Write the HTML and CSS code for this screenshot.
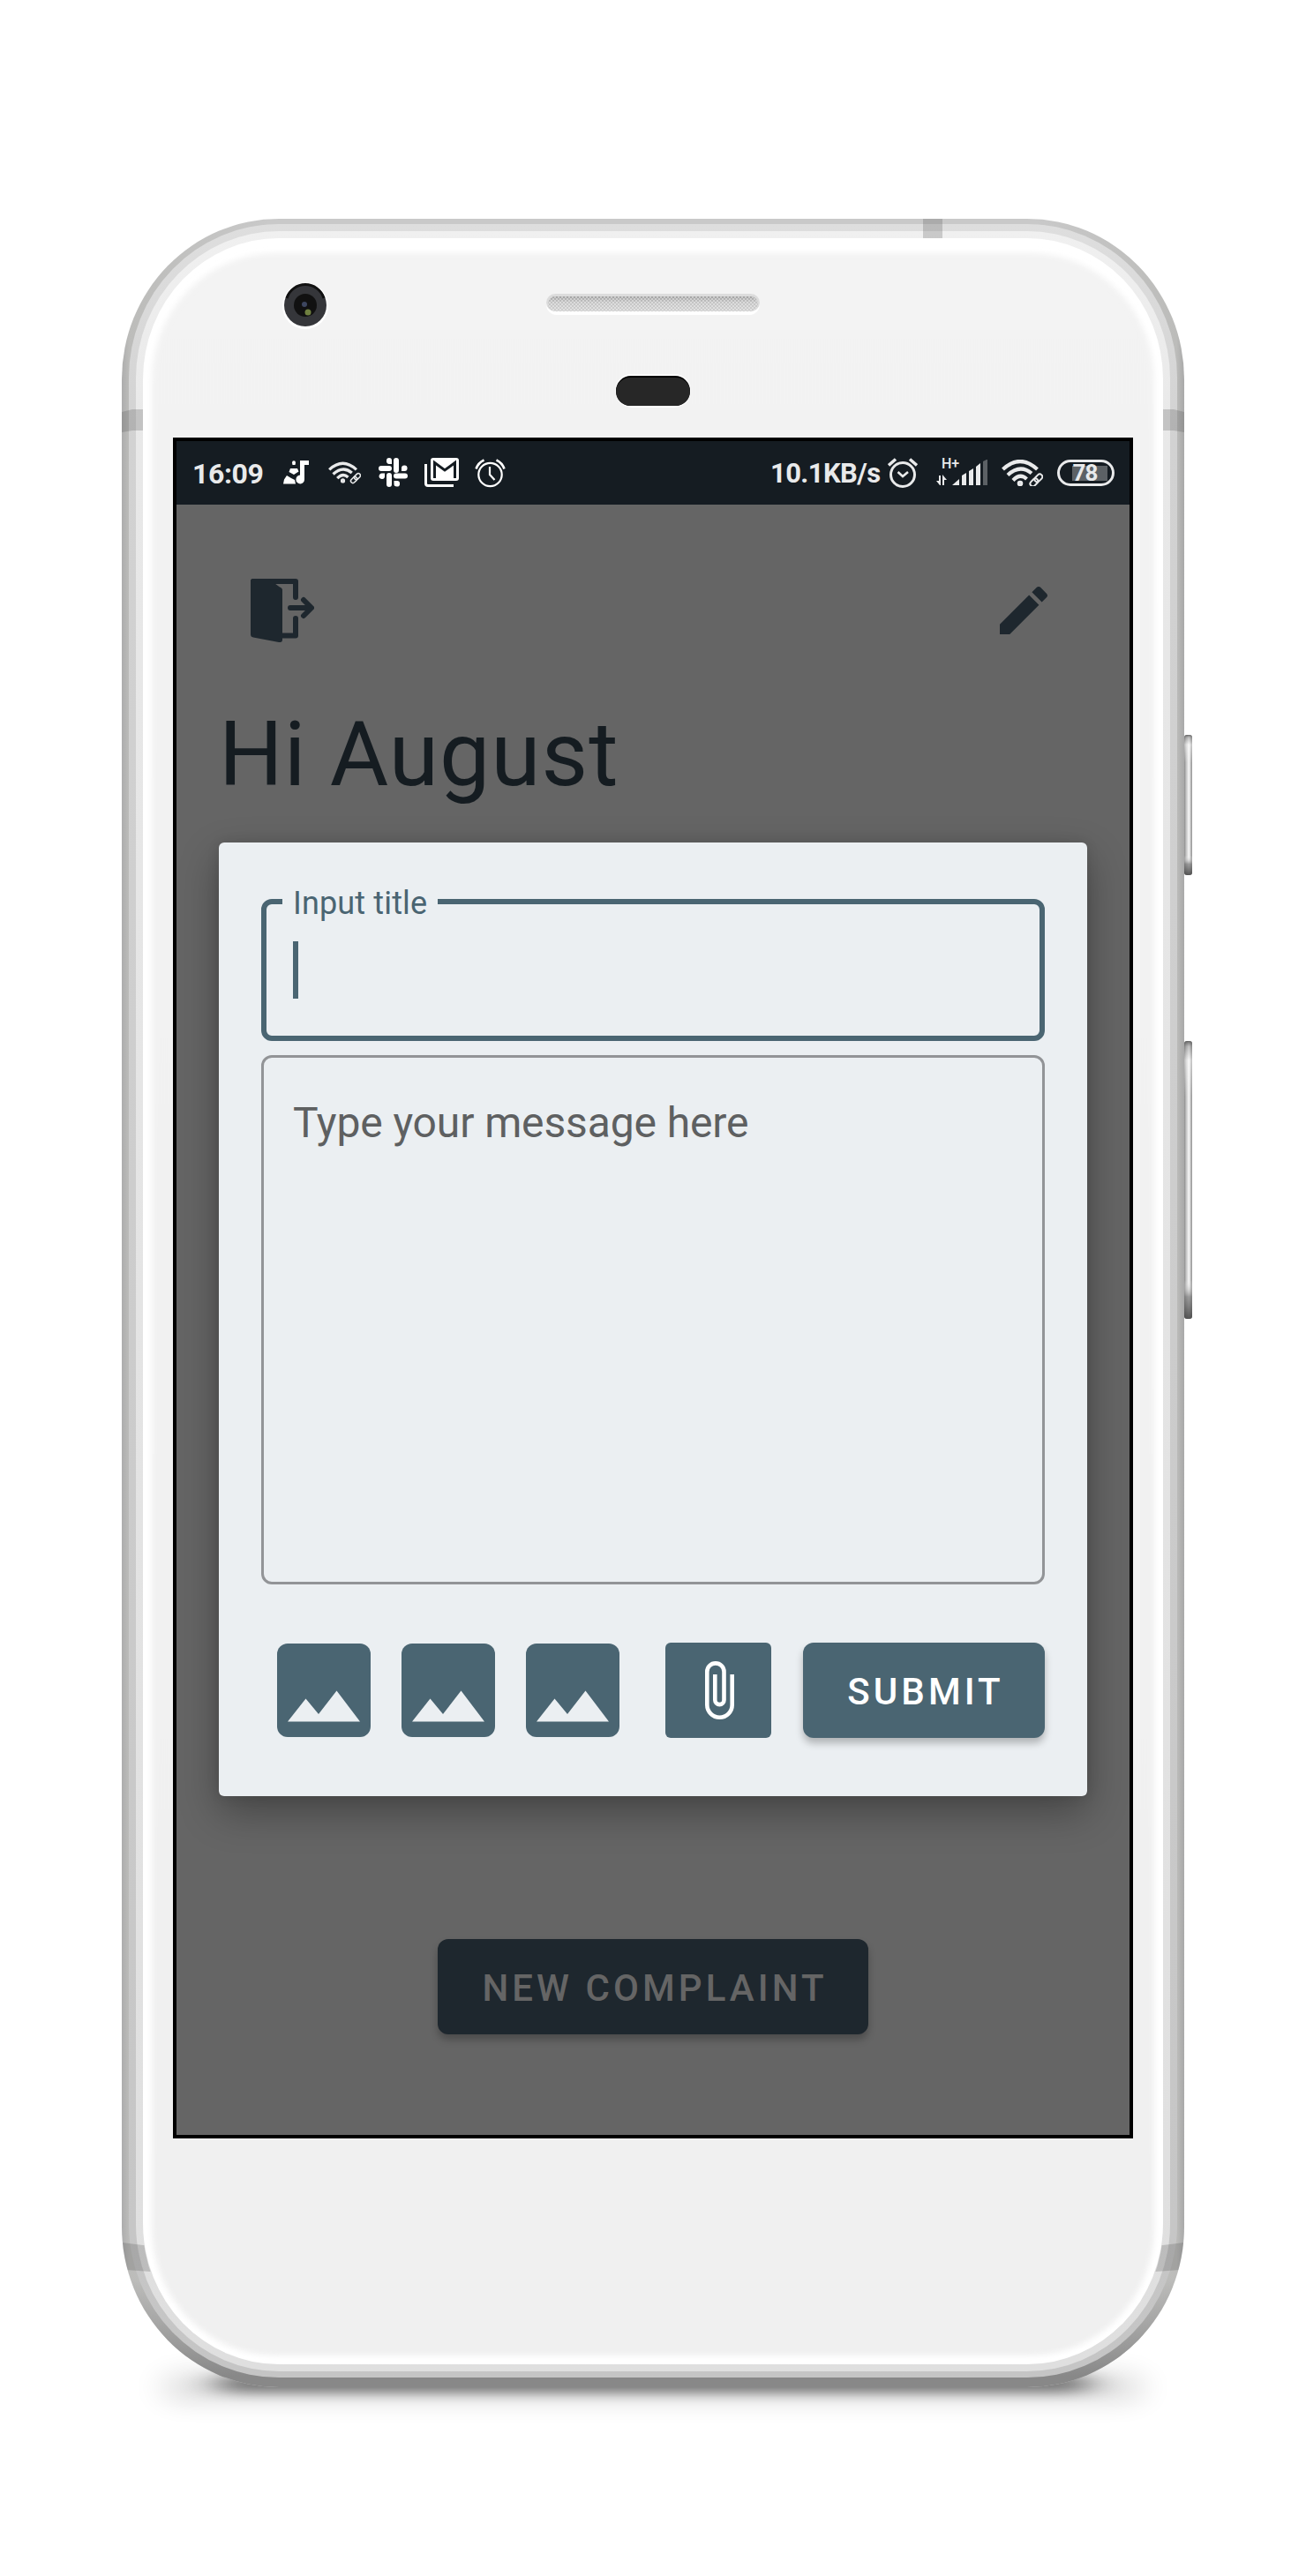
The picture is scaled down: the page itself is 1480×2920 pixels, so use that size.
FILE: index.html
```
<!DOCTYPE html>
<html lang="en">
<head>
<meta charset="utf-8">
<title>New complaint</title>
<link rel="stylesheet" href="styles.css">
</head>
<body>
<div class="stage">
  <svg class="device" viewBox="0 0 1480 2920" aria-hidden="true">
    <defs>
      <linearGradient id="rim" x1="0" y1="0" x2="1" y2="0"><stop offset="0" stop-color="#adadad"/><stop offset=".007" stop-color="#bcbcba"/><stop offset=".14" stop-color="#c9c9c9"/><stop offset=".86" stop-color="#c9c9c9"/><stop offset=".993" stop-color="#bcbcba"/><stop offset="1" stop-color="#a9a9a9"/></linearGradient>
      <linearGradient id="rimBottom" x1="0" y1="0" x2="0" y2="1"><stop offset=".95" stop-color="#888" stop-opacity="0"/><stop offset=".995" stop-color="#888"/></linearGradient>
      <linearGradient id="mid" x1="0" y1="0" x2="0" y2="1"><stop offset="0" stop-color="#dedede"/><stop offset=".1" stop-color="#d2d2d2"/><stop offset="1" stop-color="#c5c5c5"/></linearGradient>
      <linearGradient id="lip" x1="0" y1="0" x2="0" y2="1"><stop offset="0" stop-color="#f0f0f0"/><stop offset=".1" stop-color="#e8e8e8"/><stop offset="1" stop-color="#dfdfdf"/></linearGradient>
      <linearGradient id="face" x1="0" y1="0" x2="0" y2="1"><stop offset="0" stop-color="#f3f3f3"/><stop offset="1" stop-color="#f0f0f0"/></linearGradient>
      <linearGradient id="key" x1="0" y1="0" x2="1" y2="0"><stop offset="0" stop-color="#8b8b8b"/><stop offset=".25" stop-color="#c4c4c4"/><stop offset=".6" stop-color="#f8f8f8"/><stop offset="1" stop-color="#8e8e8e"/></linearGradient>
      <linearGradient id="keyEnds" x1="0" y1="0" x2="0" y2="1"><stop offset="0" stop-color="#444" stop-opacity=".8"/><stop offset=".02" stop-color="#777" stop-opacity=".4"/><stop offset=".07" stop-color="#fff" stop-opacity=".4"/><stop offset=".2" stop-color="#fff" stop-opacity="0"/><stop offset=".86" stop-color="#fff" stop-opacity="0"/><stop offset=".92" stop-color="#777" stop-opacity=".7"/><stop offset="1" stop-color="#444" stop-opacity=".9"/></linearGradient>
      <linearGradient id="slot" x1="0" y1="0" x2="0" y2="1"><stop offset="0" stop-color="#a0a0a0"/><stop offset=".4" stop-color="#c4c4c4"/><stop offset="1" stop-color="#cfcfcf"/></linearGradient>
      <pattern id="mesh" width="4" height="4" patternUnits="userSpaceOnUse"><path d="M0 0h2v2H0zM2 2h2v2H2z" fill="#fff" opacity=".4"/></pattern>
      <filter id="soft" x="-10%" y="-10%" width="120%" height="120%"><feGaussianBlur stdDeviation="3"/></filter>
      <filter id="shade" x="-20%" y="-200%" width="140%" height="500%"><feGaussianBlur stdDeviation="20 7"/></filter>
      <filter id="haze" x="-20%" y="-100%" width="140%" height="300%"><feGaussianBlur stdDeviation="18 14"/></filter>
      <clipPath id="shell"><path clip-rule="evenodd" d="M316 248H1164A178 182 0 0 1 1342 430V2524A178 182 0 0 1 1164 2706H316A178 182 0 0 1 138 2524V430A178 182 0 0 1 316 248ZM316 270A154 160 0 0 0 162 430V2524A154 156 0 0 0 316 2680H1164A154 156 0 0 0 1318 2524V430A154 160 0 0 0 1164 270Z"/></clipPath>
    </defs>
    <rect x="185" y="2690" width="1110" height="32" rx="16" fill="#000" opacity=".13" filter="url(#haze)"/>
    <rect x="245" y="2692" width="990" height="20" rx="10" fill="#000" opacity=".5" filter="url(#shade)"/>
    <rect x="1342" y="833" width="9" height="159" rx="3" fill="url(#key)"/>
    <rect x="1342" y="833" width="9" height="159" rx="3" fill="url(#keyEnds)"/>
    <rect x="1342" y="1180" width="9" height="315" rx="3" fill="url(#key)"/>
    <rect x="1342" y="1180" width="9" height="315" rx="3" fill="url(#keyEnds)"/>
    <rect x="138" y="248" width="1204" height="2458" rx="178" ry="182" fill="url(#rim)"/>
    <rect x="138" y="248" width="1204" height="2458" rx="178" ry="182" fill="url(#rimBottom)"/>
    <rect x="146" y="254" width="1188" height="2441" rx="170" ry="174" fill="url(#mid)"/>
    <rect x="154" y="262" width="1172" height="2426" rx="162" ry="167" fill="url(#lip)"/>
    <g clip-path="url(#shell)" fill="#555" opacity=".25">
      <path d="M1046 248h22v22h-22zM138 467l12-3h12v24h-12l-12 2zM1342 467l-12-3h-12v24h12l12 2zM138 2542l24 3h2l7 30-28-2h-5zM1342 2542l-24 3h-2l-7 30 28-2h5z"/>
    </g>
    <rect x="162" y="270" width="1156" height="2410" rx="154" ry="160" fill="#fff"/>
    <rect x="172" y="287" width="1136" height="2383" rx="140" ry="145" fill="url(#face)" filter="url(#soft)"/>
    <circle cx="346" cy="347" r="26" fill="#fff"/>
    <circle cx="346" cy="346" r="24" fill="#35363a"/>
    <path d="M325 338a22 22 0 0 1 42 0" fill="none" stroke="#111" stroke-width="3"/>
    <circle cx="346" cy="346" r="13" fill="#111"/>
    <circle cx="345" cy="345" r="3" fill="#3d465f"/>
    <circle cx="349" cy="354" r="3.5" fill="#6f8040"/>
    <rect x="619" y="333" width="242" height="24" rx="12" fill="#fff"/>
    <rect x="619" y="333" width="242" height="20" rx="10" fill="#dcdcdc"/>
    <rect x="621" y="336" width="238" height="17" rx="8.500" fill="url(#slot)"/>
    <rect x="621" y="336" width="238" height="17" rx="8.500" fill="url(#mesh)"/>
    <rect x="697" y="424" width="86" height="38" rx="19" fill="#fff"/>
    <rect x="698" y="426" width="84" height="34" rx="17" fill="#000"/>
    <rect x="698" y="428" width="84" height="32" rx="16" fill="#272727"/>
  </svg>

  <main class="screen">
    <header class="status">
      <span class="clock">16:09</span>
      <svg class="st-note" viewBox="0 0 29 27" fill="#fff"><path d="M19 0h10v5h-5v16.500a4.800 5 0 1 1-5-5zM10 2.500a2 2.300 0 0 1 4 0L13.500 5h-3zM8 9h8l1.500 3.500L12 16l-5.500-3zM4 17l5 3 4 2 1 4.500H0l1-5z"/></svg>
      <svg class="st-wifi" viewBox="0 0 47 30"><use href="#wifi"/></svg>
      <svg class="st-slack" viewBox="0 0 33 33" fill="#fff"><path d="M9 3a3 3 0 0 1 6 0v4h-3a3.300 3.300 0 0 1-3-4z"/><path d="M17 3a3 3 0 0 1 6 0v11a3 3 0 0 1-6 0zM26 15v-3a3.300 3.300 0 1 1 3 3h-3zM20 17.500h10a3 3 0 0 1 0 6H20a3 3 0 0 1 0-6zM17.500 26h3a3.300 3.300 0 1 1-3 3zM9 20a3 3 0 0 1 6 0v10a3 3 0 0 1-6 0zM7 17.500V20a3.300 3.300 0 1 1-3-2.500zM3 9h9a3 3 0 0 1 0 6H3a3 3 0 0 1 0-6z"/></svg>
      <svg class="st-mail" viewBox="0 0 39 33"><path d="M1.500 7v22q0 2.500 2.500 2.500h29" fill="none" stroke="#fff" stroke-width="3"/><rect x="7" width="32" height="26" rx="3" fill="#fff"/><path d="M11.500 23V5.500L23 14l11.500-8.500V23" fill="none" stroke="#151c22" stroke-width="3"/><path d="M12 3h22L23 11z" fill="#fff"/></svg>
      <svg class="st-alarm" viewBox="0 0 35 33" fill="none" stroke="#fff"><circle cx="17.500" cy="18" r="13.200" stroke-width="2.200"/><path d="M17 9v9l5.500 6" stroke-width="2.200"/><path d="M1.500 11.500Q4 4.500 10.500 1.500M33.500 11.500Q31 4.500 24.500 1.500" stroke-width="2.600"/></svg>
      <span class="rate">10.1KB/s</span>
      <svg class="st-alarm2" viewBox="0 0 34 34" fill="none" stroke="#e9eaeb"><circle cx="17" cy="19" r="13.500" stroke-width="3"/><path d="M11.500 16l5.500 5 6-5" stroke-width="2.600"/><path d="M1 8.500L9 1.500M33 8.500L25 1.500" stroke-width="3.500"/></svg>
      <span class="net">
        <b class="hplus">H+</b>
        <svg class="st-signal" viewBox="0 0 58 30" fill="#e9eaeb"><path d="M18 30l8-7v7zM29 30V19l5-3v14zM37 30V14l5-3v19zM45 30V9l5-4v25z"/><path d="M53 30V3l4-2h1v29z" fill="#5c6165"/><path d="M0 25h3V19h2v11H4zM7 30V18l5 6H9v6z"/></svg>
      </span>
      <svg class="st-wifi2" viewBox="0 0 47 30"><g id="wifi" fill="none" stroke="#e9eaeb" stroke-width="4.200"><path d="M1.500 11Q21 -7 40.500 11"/><path d="M7 17.500Q21 4.500 34 15.500"/><path d="M13 23.500Q21 15 28.500 22"/><circle cx="21" cy="27" r="1.800" stroke-width="3"/><g stroke-width="2" transform="rotate(-45 39 23)"><rect x="30.500" y="20.500" width="10" height="6" rx="3"/><rect x="37.500" y="20.500" width="10" height="6" rx="3"/></g></g></svg>
      <span class="battery"><b>78</b></span>
    </header>

    <section class="home">
      <div class="tools">
        <svg class="exit" viewBox="0 0 72 72"><path d="M3 3H51V21M51 45V64.500H33" fill="none" stroke="#1e272e" stroke-width="6" stroke-linecap="round" stroke-linejoin="round"/><path d="M3 0H20L33 9.500Q36 10.500 36 13V69.500Q36 72.500 32 72L3 66.500Q0 66 0 63V3Q0 0 3 0Z" fill="#1e272e"/><path d="M45 33H67M60 24l9 9-9 9" fill="none" stroke="#1e272e" stroke-width="6" stroke-linecap="round" stroke-linejoin="round"/></svg>
        <svg class="pencil" viewBox="3 3 18 18" fill="#1e272e"><path d="M3 17.250V21h3.750L17.810 9.940l-3.750-3.750L3 17.250zM20.710 7.040c.39-.39.39-1.020 0-1.410l-2.340-2.340c-.39-.39-1.020-.39-1.410 0l-1.830 1.830 3.750 3.750 1.830-1.830z"/></svg>
      </div>
      <h1 class="hello">Hi August</h1>
      <div class="dialog">
        <div class="field"><span class="label">Input title</span><span class="caret"></span></div>
        <div class="message">Type your message here</div>
        <div class="actions">
          <svg class="pic" viewBox="0 0 106 106"><rect width="106" height="106" rx="12" fill="#4a6572"/><path d="M12 88.500L32.500 62.500 47 80 67.500 53.500 94 88.500z" fill="#ebeff2"/></svg>
          <svg class="pic" viewBox="0 0 106 106"><rect width="106" height="106" rx="12" fill="#4a6572"/><path d="M12 88.500L32.500 62.500 47 80 67.500 53.500 94 88.500z" fill="#ebeff2"/></svg>
          <svg class="pic" viewBox="0 0 106 106"><rect width="106" height="106" rx="12" fill="#4a6572"/><path d="M12 88.500L32.500 62.500 47 80 67.500 53.500 94 88.500z" fill="#ebeff2"/></svg>
          <span class="attach"><svg viewBox="0 0 33 66" fill="none" stroke="#fff" stroke-width="4.600"><path d="M30.700 15V49.500A14.200 14.200 0 0 1 2.300 49.500V12A9.500 9.500 0 0 1 21.500 12V44A5 5 0 0 1 11.300 44V15"/></svg></span>
          <button class="btn submit">SUBMIT</button>
        </div>
      </div>
      <button class="btn create">NEW COMPLAINT</button>
    </section>
  </main>
</div>
</body>
</html>
```
FILE: styles.css
```
* { box-sizing: border-box; }
body { margin: 0; background: #fff; font-family: Roboto, "Liberation Sans", sans-serif; }
.stage { position: relative; width: 1480px; height: 2920px; padding: 496px 196px 0; overflow: hidden; background: #fff; }
.device { position: absolute; inset: 0; width: 1480px; height: 2920px; }
.screen { position: relative; width: 1088px; height: 1928px; border: 4px solid #000; background: #656565; overflow: hidden; }

.status { display: flex; align-items: flex-start; height: 72px; padding: 19px 16px 0 18px; background: #151c22; color: #e9eaeb; }
.status > * { flex: none; }
.clock { width: 103px; font-size: 32px; font-weight: 700; line-height: 36px; letter-spacing: -.4px; }
.st-note { width: 29px; height: 27px; margin: 3px 22px 0 0; }
.st-wifi { width: 37px; height: 27px; margin: 3px 20px 0 0; }
.st-slack { width: 33px; height: 33px; margin-right: 19px; }
.st-mail { width: 39px; height: 33px; margin-right: 18px; }
.st-alarm { width: 35px; height: 33px; margin: 1px 300px 0 0; }
.rate { width: 133px; font-size: 31px; font-weight: 700; line-height: 36px; letter-spacing: -.6px; white-space: nowrap; }
.st-alarm2 { width: 34px; height: 34px; margin-right: 21px; }
.net { position: relative; width: 58px; height: 34px; margin-right: 16px; }
.st-signal { display: block; width: 58px; height: 30px; margin-top: 1px; }
.hplus { position: absolute; left: 6px; top: -1px; font-size: 16px; font-weight: 500; line-height: 16px; }
.st-wifi2 { width: 47px; height: 30px; margin: 2px 16px 0 0; }
.battery { display: flex; align-items: center; justify-content: center; width: 65px; height: 30px; margin-top: 2px; border: 3px solid #e9eaeb; border-radius: 15px; background: linear-gradient(#5c6165, #5c6165) 14px center / 40px 17px no-repeat; }
.battery b { margin-right: 2px; font-size: 26px; line-height: 24px; letter-spacing: -1px; }

.home { display: flex; flex-direction: column; height: 1848px; }
.tools { display: flex; justify-content: space-between; align-items: flex-start; height: 223px; padding: 84px 93px 0 84px; }
.exit { width: 72px; height: 72px; }
.pencil { width: 54px; height: 54px; margin-top: 9px; }
.hello { height: 160px; margin: 0 0 0 48px; color: #151c21; font-size: 102px; font-weight: 400; line-height: 120px; letter-spacing: 1px; }
.dialog { width: 984px; height: 1081px; margin: 0 48px; padding: 64px 48px 0; border-radius: 6px; background: #ebeff2; box-shadow: 0 18px 46px rgba(0, 0, 0, .32), 0 0 14px rgba(0, 0, 0, .1); }
.field { position: relative; height: 161px; padding: 48px 0 0 36px; border: 6px solid #4a6572; border-radius: 12px; }
.field .caret { display: block; width: 6px; height: 65px; margin: -6px 0 0 -6px; background: #4a6572; }
.label { position: absolute; left: 18px; top: -22px; width: 176px; padding-left: 12px; background: #ebeff2; color: #4a6572; font-size: 36px; line-height: 42px; letter-spacing: .15px; white-space: nowrap; }
.message { height: 600px; margin-top: 16px; padding: 44px 33px; border: 3px solid #929497; border-radius: 12px; color: #5e6061; font-size: 48px; line-height: 60px; letter-spacing: -.12px; }
.actions { display: flex; align-items: flex-start; margin-top: 66px; padding-left: 17.5px; }
.pic { width: 106px; height: 106px; margin: 1px 35px 0 0; }
.attach { display: flex; align-items: center; justify-content: center; width: 120px; height: 108px; margin: 0 36px 0 17.5px; border-radius: 6px; background: #4a6572; }
.attach svg { width: 33px; height: 66px; margin-left: 3px; }
.btn { display: block; height: 108px; padding: 3px 0 0 4px; border: 0; border-radius: 12px; font: 500 42px/105px Roboto, "Liberation Sans", sans-serif; letter-spacing: 4.050px; white-space: nowrap; box-shadow: 0 6px 8px rgba(0, 0, 0, .25); }
.submit { width: 274px; background: #4a6572; color: #fff; }
.create { width: 488px; margin: 162px auto 0; background: #1e272e; color: #656565; }
```
